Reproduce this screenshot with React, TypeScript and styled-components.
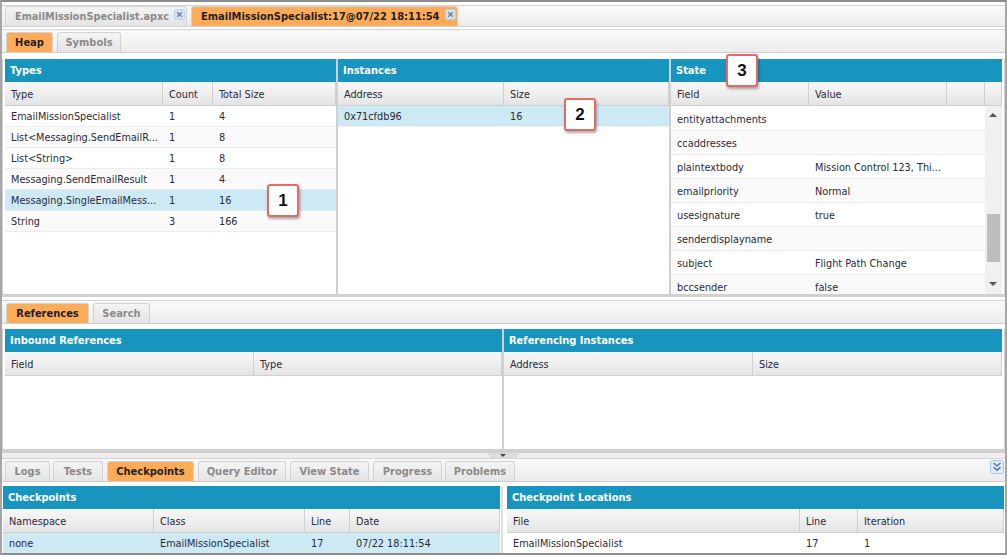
import React from "react";
import styled, { createGlobalStyle } from "styled-components";

const GlobalStyle = createGlobalStyle`
  html, body {
    margin: 0;
    padding: 0;
    background: #fff;
    overflow: hidden;
  }
`;

interface ColumnSet {
  widths: string;
  labels: string[];
}

function CloseBox() {
  return (
    <CloseIcon width="11" height="11" viewBox="0 0 11 11">
      <rect x="0.5" y="0.5" width="10" height="10" rx="2" fill="#d5e2f3" stroke="#bccfe8" />
      <path d="M3.2 3.2l4.6 4.6M7.8 3.2l-4.6 4.6" stroke="#7688a0" strokeWidth="1.6" />
    </CloseIcon>
  );
}

function Panel({
  title,
  columns,
  grow,
  children,
}: {
  title: string;
  columns: ColumnSet;
  grow?: number;
  children?: React.ReactNode;
}) {
  return (
    <PanelBox $grow={grow}>
      <PanelTitle>{title}</PanelTitle>
      <HeaderRow $cols={columns.widths}>
        {columns.labels.map((label, i) => (
          <HeaderCell key={i}>{label}</HeaderCell>
        ))}
      </HeaderRow>
      <PanelBody>{children}</PanelBody>
    </PanelBox>
  );
}

function DataRow({
  cols,
  cells,
  selected,
  odd,
  tall,
}: {
  cols: string;
  cells: string[];
  selected?: boolean;
  odd?: boolean;
  tall?: boolean;
}) {
  return (
    <Row $cols={cols} $selected={selected} $odd={odd} $tall={tall}>
      {cells.map((cell, i) => (
        <Cell key={i}>{cell}</Cell>
      ))}
    </Row>
  );
}

const typeCols = { widths: "158px 50px 1fr", labels: ["Type", "Count", "Total Size"] };
const instanceCols = { widths: "166px 1fr", labels: ["Address", "Size"] };
const stateCols = { widths: "138px 138px 38px 1fr", labels: ["Field", "Value", "", ""] };
const inboundCols = { widths: "249px 1fr", labels: ["Field", "Type"] };
const referencingCols = { widths: "249px 1fr", labels: ["Address", "Size"] };
const checkpointCols = { widths: "151px 151px 45px 1fr", labels: ["Namespace", "Class", "Line", "Date"] };
const locationCols = { widths: "293px 58px 1fr", labels: ["File", "Line", "Iteration"] };

const typeRows = [
  ["EmailMissionSpecialist", "1", "4"],
  ["List<Messaging.SendEmailR...", "1", "8"],
  ["List<String>", "1", "8"],
  ["Messaging.SendEmailResult", "1", "4"],
  ["Messaging.SingleEmailMess...", "1", "16"],
  ["String", "3", "166"],
];

const stateRows = [
  ["entityattachments", ""],
  ["ccaddresses", ""],
  ["plaintextbody", "Mission Control 123, Thi..."],
  ["emailpriority", "Normal"],
  ["usesignature", "true"],
  ["senderdisplayname", ""],
  ["subject", "Flight Path Change"],
  ["bccsender", "false"],
];

const bottomTabs = [
  { label: "Logs", width: 45, gap: 3 },
  { label: "Tests", width: 50, gap: 4 },
  { label: "Checkpoints", width: 87, gap: 4, active: true },
  { label: "Query Editor", width: 88, gap: 4 },
  { label: "View State", width: 79, gap: 4 },
  { label: "Progress", width: 69, gap: 3 },
  { label: "Problems", width: 70, gap: 0 },
];

export default function App() {
  return (
    <Page>
      <GlobalStyle />

      <TabBar $top={3} $height={22} $pad={3}>
        <Tab $width={182} $gap={4} $closable>
          EmailMissionSpecialist.apxc
          <CloseBox />
        </Tab>
        <Tab $width={267} $active $closable>
          EmailMissionSpecialist:17@07/22 18:11:54
          <CloseBox />
        </Tab>
      </TabBar>

      <TabBar $top={2} $height={24} $pad={4}>
        <Tab $active $width={47} $gap={4}>Heap</Tab>
        <Tab $width={64}>Symbols</Tab>
      </TabBar>

      <PanelRow $height={235} $top={6} $side={3} $strip>
        <Panel title="Types" columns={typeCols}>
          {typeRows.map((row, i) => (
            <DataRow key={i} cols={typeCols.widths} cells={row} odd={i % 2 === 1} selected={i === 4} />
          ))}
        </Panel>
        <PanelGap />
        <Panel title="Instances" columns={instanceCols}>
          <DataRow cols={instanceCols.widths} cells={["0x71cfdb96", "16"]} selected />
        </Panel>
        <PanelGap />
        <Panel title="State" columns={stateCols}>
          <StateList>
            <StateRows>
              {stateRows.map((row, i) => (
                <DataRow key={i} cols="138px 1fr" cells={row} odd={i % 2 === 1} tall />
              ))}
            </StateRows>
            <ScrollTrack>
              <ScrollArrow $up />
              <ScrollThumb />
              <ScrollArrow />
            </ScrollTrack>
          </StateList>
        </Panel>
      </PanelRow>

      <Splitter $height={3} />

      <TabBar $top={3} $height={24} $pad={4}>
        <Tab $active $width={83} $gap={4}>References</Tab>
        <Tab $width={57}>Search</Tab>
      </TabBar>

      <PanelRow $height={120} $top={5} $side={3} $strip>
        <Panel title="Inbound References" columns={inboundCols} grow={497} />
        <PanelGap />
        <Panel title="Referencing Instances" columns={referencingCols} grow={498} />
      </PanelRow>

      <Splitter $height={9} $notched>
        <SplitHandle />
      </Splitter>

      <TabBar $top={0} $height={24} $pad={3}>
        {bottomTabs.map((tab) => (
          <Tab key={tab.label} $active={tab.active} $width={tab.width} $gap={tab.gap}>
            {tab.label}
          </Tab>
        ))}
        <CollapseButton>
          <svg width="14" height="14" viewBox="0 0 14 14">
            <rect x="0.5" y="0.5" width="13" height="13" rx="2.5" fill="#e4eefb" stroke="#a3c5f2" />
            <path d="M3.5 3l3.5 3 3.5-3M3.5 7.2l3.5 3 3.5-3" fill="none" stroke="#4f7db8" strokeWidth="1.6" />
          </svg>
        </CollapseButton>
      </TabBar>

      <PanelRow $height={67} $top={4} $side={1}>
        <Panel title="Checkpoints" columns={checkpointCols}>
          <DataRow cols={checkpointCols.widths} cells={["none", "EmailMissionSpecialist", "17", "07/22 18:11:54"]} selected />
        </Panel>
        <WideGap />
        <Panel title="Checkpoint Locations" columns={locationCols}>
          <DataRow cols={locationCols.widths} cells={["EmailMissionSpecialist", "17", "1"]} />
        </Panel>
      </PanelRow>

      <Callout $x={265} $y={182}>1</Callout>
      <Callout $x={562} $y={96}>2</Callout>
      <Callout $x={724} $y={52}>3</Callout>
    </Page>
  );
}

const Page = styled.div`
  position: relative;
  box-sizing: border-box;
  width: 1007px;
  height: 555px;
  overflow: hidden;
  display: flex;
  flex-direction: column;
  background: #fff;
  border: 2px solid #a6a6a6;
  border-top-color: #8c8c8c;
  border-bottom-color: #8c8c8c;
  font-family: "DejaVu Sans Condensed", "Liberation Sans", sans-serif;
  font-size: 10.8px;
  color: #2a2a3c;
`;

const TabBar = styled.div<{ $top: number; $height: number; $pad: number }>`
  position: relative;
  flex: none;
  box-sizing: border-box;
  margin-top: ${(props) => props.$top}px;
  height: ${(props) => props.$height}px;
  padding-left: ${(props) => props.$pad}px;
  display: flex;
  align-items: flex-end;
  background: linear-gradient(#f9f9f9, #ececec);
  border-top: 1px solid #d4d4d4;
  border-bottom: 1px solid #cfcfcf;
`;

const Tab = styled.div<{ $active?: boolean; $width: number; $gap?: number; $closable?: boolean }>`
  flex: none;
  box-sizing: border-box;
  width: ${(props) => props.$width}px;
  height: 20px;
  margin-right: ${(props) => props.$gap ?? 0}px;
  padding: ${(props) => (props.$closable ? "0 1px 0 9px" : "0")};
  display: flex;
  align-items: center;
  justify-content: ${(props) => (props.$closable ? "space-between" : "center")};
  border: 1px solid #d2d2d2;
  border-bottom: none;
  border-radius: 3px 3px 0 0;
  font-size: ${(props) => (props.$closable && !props.$active ? "10.8px" : "11px")};
  font-weight: 700;
  white-space: nowrap;
  color: ${(props) => (props.$active ? "#1f1f1f" : "#8a8a8a")};
  background: ${(props) => (props.$active ? "#ffab57" : "linear-gradient(#f4f4f4, #e4e4e4)")};
`;

const CloseIcon = styled.svg`
  flex: none;
  margin-top: -4px;
`;

const PanelRow = styled.div<{ $height: number; $top: number; $side: number; $strip?: boolean }>`
  flex: none;
  display: flex;
  height: ${(props) => props.$height}px;
  margin-top: ${(props) => props.$top}px;
  padding: 0 ${(props) => props.$side}px;
  box-shadow: ${(props) =>
    props.$strip ? "inset 1px 0 0 #d0d0d0, inset -1px 0 0 #d0d0d0" : "none"};
`;

const PanelGap = styled.div`
  flex: none;
  width: 2px;
  background: #d0d0d0;
`;

const WideGap = styled.div`
  flex: none;
  width: 7px;
  background: linear-gradient(90deg, #fff 0 1px, #dedede 1px 3px, #fff 3px);
`;

const PanelBox = styled.div<{ $grow?: number }>`
  flex: ${(props) => props.$grow ?? 1} 1 0;
  min-width: 0;
  display: flex;
  flex-direction: column;
`;

const PanelTitle = styled.div`
  flex: none;
  height: 23px;
  line-height: 23px;
  padding-left: 5px;
  background: #1895bf;
  color: #fff;
  font-size: 11px;
  font-weight: 700;
`;

const HeaderRow = styled.div<{ $cols: string }>`
  flex: none;
  box-sizing: border-box;
  height: 24px;
  display: grid;
  grid-template-columns: ${(props) => props.$cols};
  background: linear-gradient(#f8f8f8, #e4e4e4);
  border-bottom: 1px solid #cfcfcf;
`;

const HeaderCell = styled.div`
  line-height: 23px;
  padding: 1px 0 0 6px;
  border-right: 1px solid #cfcfcf;
  overflow: hidden;
`;

const PanelBody = styled.div`
  flex: 1;
  min-height: 0;
  overflow: hidden;
  background: #fff;
`;

const Row = styled.div<{ $cols: string; $selected?: boolean; $odd?: boolean; $tall?: boolean }>`
  box-sizing: border-box;
  height: ${(props) => (props.$tall ? 24 : 21)}px;
  padding-top: ${(props) => (props.$tall ? 2 : 0)}px;
  display: grid;
  grid-template-columns: ${(props) => props.$cols};
  align-items: center;
  border-bottom: 1px solid #ececec;
  background: ${(props) => (props.$selected ? "#cce9f4" : props.$odd ? "#fafafa" : "#fff")};
`;

const Cell = styled.div`
  padding-left: 6px;
  white-space: nowrap;
`;

const StateList = styled.div`
  height: 100%;
  display: flex;
`;

const StateRows = styled.div`
  flex: 1;
  min-width: 0;
  padding-top: 1px;
`;

const ScrollTrack = styled.div`
  position: relative;
  flex: none;
  width: 17px;
  background: #f0f0f0;
`;

const ScrollThumb = styled.div`
  position: absolute;
  left: 2px;
  right: 2px;
  top: 108px;
  height: 48px;
  background: #bdbdbd;
`;

const ScrollArrow = styled.div<{ $up?: boolean }>`
  position: absolute;
  left: 4px;
  ${(props) => (props.$up ? "top: 7px;" : "bottom: 8px;")}
  border-left: 4px solid transparent;
  border-right: 4px solid transparent;
  ${(props) => (props.$up ? "border-bottom" : "border-top")}: 4px solid #555;
`;

const Splitter = styled.div<{ $height: number; $notched?: boolean }>`
  position: relative;
  flex: none;
  height: ${(props) => props.$height}px;
  background: ${(props) =>
    props.$notched ? "linear-gradient(#d0d0d0 0 4px, #eeeeee 4px)" : "#d0d0d0"};
`;

const SplitHandle = styled.div`
  position: absolute;
  left: 485px;
  top: 4px;
  width: 33px;
  height: 5px;
  background: #dcdcdc;
  clip-path: polygon(0 0, 100% 0, 88% 100%, 12% 100%);

  &::after {
    content: "";
    position: absolute;
    left: 13px;
    top: 1px;
    border-left: 3px solid transparent;
    border-right: 3px solid transparent;
    border-top: 3px solid #444;
  }
`;

const CollapseButton = styled.div`
  position: absolute;
  right: 1px;
  top: 1px;
  width: 14px;
  height: 14px;
  line-height: 0;
`;

const Callout = styled.div<{ $x: number; $y: number }>`
  position: absolute;
  left: ${(props) => props.$x}px;
  top: ${(props) => props.$y}px;
  width: 32px;
  height: 33px;
  box-sizing: border-box;
  display: flex;
  align-items: center;
  justify-content: center;
  background: #fff;
  border: 2px solid #e56a66;
  border-radius: 3px;
  box-shadow: 1px 2px 3px rgba(0, 0, 0, 0.35);
  font-family: "Liberation Sans", sans-serif;
  font-size: 17px;
  font-weight: 700;
  color: #111;
`;
